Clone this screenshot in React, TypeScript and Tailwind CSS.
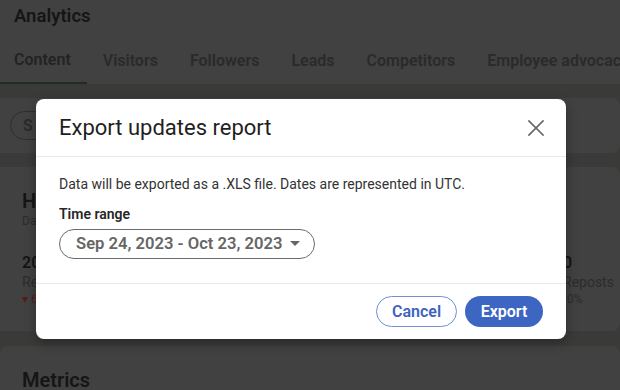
import React from "react";

const font = { fontFamily: "Roboto, 'Noto Sans', sans-serif" };

export default function App() {
  return (
    <div className="relative w-[620px] h-[390px] overflow-hidden bg-[#3a3a39]" style={font}>
      {/* background page (under overlay) */}
      <div className="bg-[#414141] h-[85px] border-b border-[#383838] flex flex-col">
        <div className="px-[14px] pt-[5px] text-[18.5px] leading-[23px] font-semibold text-[#151515]">
          Analytics
        </div>
        <div className="flex mt-auto text-[16px] font-semibold text-[#2a2a2a] whitespace-nowrap">
          <div className="pl-[14px] pr-[16px] h-[49px] pt-[3px] flex items-center border-b-2 border-[#1f2e22] text-[#232323]">Content</div>
          <div className="px-[16px] h-[49px] pt-[3px] flex items-center">Visitors</div>
          <div className="px-[16px] h-[49px] pt-[3px] flex items-center">Followers</div>
          <div className="px-[16px] h-[49px] pt-[3px] flex items-center">Leads</div>
          <div className="px-[16px] h-[49px] pt-[3px] flex items-center">Competitors</div>
          <div className="px-[16px] h-[49px] pt-[3px] flex items-center">Employee advocacy</div>
        </div>
      </div>
      <div className="mt-[13px] h-[55px] bg-[#414141] rounded-r-lg flex items-center px-[10px]">
        <div className="h-[29px] w-[80px] rounded-full border border-[#2e2e2e] flex items-center px-[12px] text-[16px] font-semibold text-[#2a2a2a]">
          S
        </div>
      </div>
      <div className="mt-[14px] h-[164px] bg-[#414141] rounded-r-lg px-[22px] pt-[22px]">
        <div className="text-[20px] leading-[24px] font-semibold text-[#151515]">H</div>
        <div className="text-[12px] leading-[16px] text-[#2c2c2c]">Da</div>
        <div className="flex justify-between mt-[24px]">
          <div>
            <div className="text-[16px] leading-[20px] font-semibold text-[#151515]">20</div>
            <div className="text-[14px] leading-[18px] text-[#2c2c2c]">Re</div>
            <div className="text-[12px] leading-[16px] text-[#5a1a1a]">▾ 6</div>
          </div>
          <div className="w-[57px] mr-[-22px]">
            <div className="text-[16px] leading-[20px] font-semibold text-[#151515]">0</div>
            <div className="text-[14px] leading-[18px] text-[#2c2c2c]">Reposts</div>
            <div className="text-[12px] leading-[16px] text-[#2c2c2c]">•0%</div>
          </div>
        </div>
      </div>
      <div className="mt-[15px] h-[60px] bg-[#414141] rounded-lg px-[22px] pt-[22px]">
        <div className="text-[20px] leading-[24px] font-semibold text-[#151515]">Metrics</div>
      </div>

      {/* modal */}
      <div className="absolute left-[36px] top-[99px] w-[530px] h-[240px] bg-white rounded-[8px] shadow-[0_4px_12px_rgba(0,0,0,0.3)] flex flex-col">
        <div className="h-[58px] flex items-center justify-between pl-[23px] pr-[22px] border-b border-[#e9e9e9]">
          <div className="text-[22px] font-normal text-[#1f1f1f]">Export updates report</div>
          <svg width="16" height="16" viewBox="0 0 16 16">
            <path d="M1 1 L15 15 M15 1 L1 15" stroke="#666" strokeWidth="1.7" strokeLinecap="square" />
          </svg>
        </div>
        <div className="px-[23px] pt-[17px] h-[127px] border-b border-[#e9e9e9]">
          <div className="text-[14px] leading-[20px] text-[#333]">
            Data will be exported as a .XLS file. Dates are represented in UTC.
          </div>
          <div className="mt-[10px] text-[14px] leading-[20px] font-semibold text-[#262626]">Time range</div>
          <div className="mt-[5px] w-[256px] h-[30px] rounded-full border border-[#6b6b6b] flex items-center pl-[16px] pr-[14px] justify-between">
            <span className="text-[16.6px] font-semibold text-[#666] whitespace-nowrap">Sep 24, 2023 - Oct 23, 2023</span>
            <svg width="10" height="6" viewBox="0 0 10 6">
              <path d="M0 0 L10 0 L5 5 Z" fill="#666" />
            </svg>
          </div>
        </div>
        <div className="flex-1 flex items-center justify-end pr-[23px] gap-[8px]">
          <button className="h-[31px] w-[81px] rounded-full border border-[#6d8fd8] text-[#3c64bf] text-[16px] font-semibold">
            Cancel
          </button>
          <button className="h-[31px] w-[78px] rounded-full bg-[#3d66c2] text-white text-[16px] font-semibold">
            Export
          </button>
        </div>
      </div>
    </div>
  );
}
